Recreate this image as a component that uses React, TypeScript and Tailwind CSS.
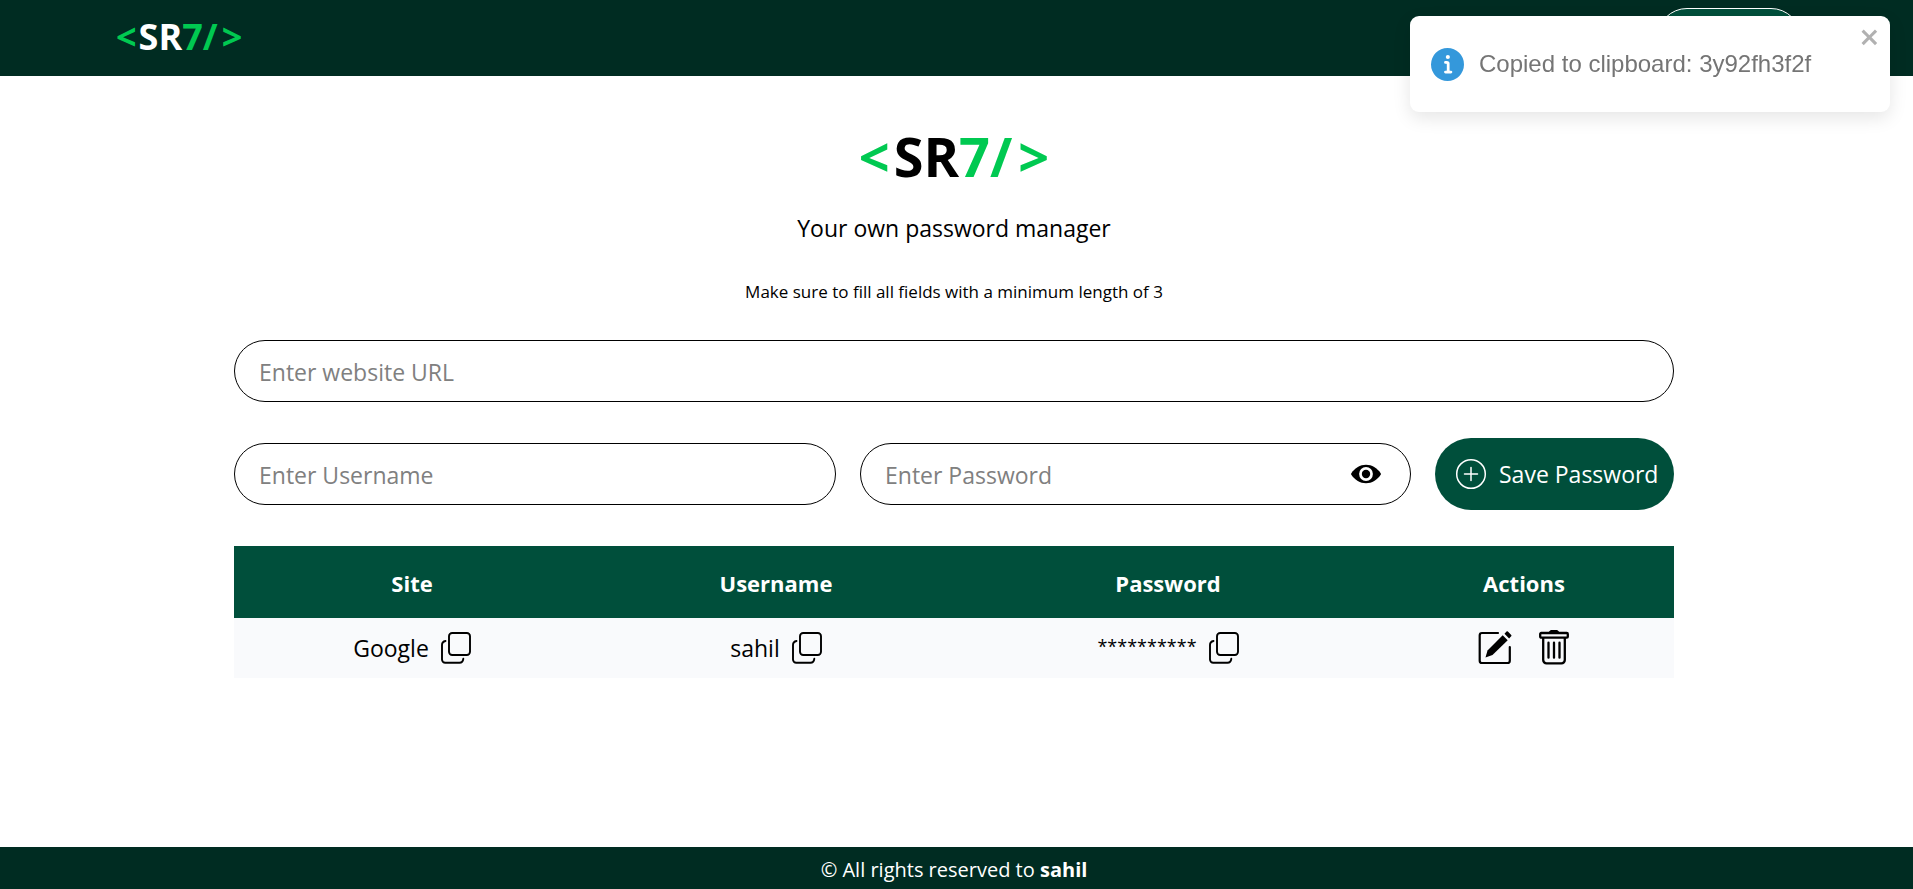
import { useState } from "react";

function Logo({ className, open, close }: { className: string; open: string; close: string }) {
  return (
    <span className={`font-bold whitespace-nowrap ${className}`}>
      <span className={`text-[#00c951] ${open}`}>&lt;</span>
      SR
      <span className="text-[#00c951]">7/</span>
      <span className={`text-[#00c951] ${close}`}>&gt;</span>
    </span>
  );
}

function CopyIcon() {
  return (
    <svg viewBox="0 0 30 32" className="h-8 w-[30px]" fill="none" stroke="#000" strokeWidth="1.9" strokeLinecap="round">
      <rect x="8" y="1" width="21" height="22" rx="3.2" />
      <path d="M4.500 9C2.400 9.400 1 10.800 1 13V27.500A3.200 3.200 0 0 0 4.200 30.700H18.500C20.700 30.700 22 29.300 22.300 26.800" />
    </svg>
  );
}

function EditIcon() {
  return (
    <svg viewBox="0 0 36 36" className="size-9" fill="none" stroke="#000" strokeWidth="2.2" strokeLinecap="round" strokeLinejoin="round">
      <path d="M20 3H4A2.300 2.300 0 0 0 1.700 5.300V30.700A2.300 2.300 0 0 0 4 33H29.500A2.300 2.300 0 0 0 31.800 30.700V17" />
      <path d="M7.500 27.500L9.500 20.500L24.700 5.300L29.700 10.300L14.500 25Z" fill="#000" stroke="none" />
      <path d="M26.500 3.800L28.500 1.600Q29.200 1 29.900 1.600L33.200 4.900Q33.900 5.600 33.200 6.300L31.100 8.500Z" fill="#000" stroke="none" />
    </svg>
  );
}

function TrashIcon() {
  return (
    <svg viewBox="0 0 32 36" className="h-9 w-8" fill="none" stroke="#000" strokeWidth="2.3" strokeLinecap="round" strokeLinejoin="round">
      <rect x="2.200" y="3" width="27.600" height="4.700" rx="1" />
      <path d="M12 2.200L13 1.200H19L20 2.200Z" fill="#000" />
      <path d="M5.200 8.200V30A3.300 3.300 0 0 0 8.500 33.300H23.500A3.300 3.300 0 0 0 26.800 30V8.200" />
      <path d="M10.500 12.700V27.700M16 12.700V27.700M21.500 12.700V27.700" />
    </svg>
  );
}

function EyeIcon() {
  return (
    <svg viewBox="0 0 32 24" className="h-6 w-8">
      <path d="M1.300 11.200C5 5.800 10 2.700 16 2.700S27 5.800 30.700 11.200Q31.200 12 30.700 12.800C27 18.200 22 21.300 16 21.300S5 18.200 1.300 12.800Q.8 12 1.300 11.200Z" />
      <circle cx="16" cy="12" r="6.900" fill="#fff" />
      <circle cx="16" cy="12" r="4.200" />
    </svg>
  );
}

function PlusIcon() {
  return (
    <svg viewBox="0 0 32 32" className="size-8 shrink-0" fill="none" stroke="#fff" strokeWidth="1.500" strokeLinecap="round">
      <circle cx="16" cy="16" r="14.300" />
      <path d="M16 9.500V22.500M9.500 16H22.500" />
    </svg>
  );
}

function Toast({ message, onClose }: { message: string; onClose: () => void }) {
  return (
    <div
      role="alert"
      className="fixed top-4 right-[23px] flex h-24 w-[480px] items-center gap-[15px] rounded-[9px] bg-white pl-[21px] font-['Liberation_Sans',sans-serif] text-2xl text-[#757575] shadow-[0_6px_18px_rgba(0,0,0,0.1)]"
    >
      <svg viewBox="0 0 24 24" className="size-[33px] shrink-0" fill="#3498db">
        <path d="M12 0a12 12 0 1012 12A12.013 12.013 0 0012 0zm.25 5a1.500 1.500 0 11-1.500 1.500 1.500 1.500 0 011.500-1.500zm2.250 13.500h-4a1 1 0 010-2h.75a.25.25 0 00.25-.25v-4.500a.25.25 0 00-.25-.25h-.75a1 1 0 010-2h1a2 2 0 012 2v4.750a.25.25 0 00.25.25h.75a1 1 0 110 2z" />
      </svg>
      <span>{message}</span>
      <button type="button" aria-label="Close" onClick={onClose} className="absolute top-[9px] right-[9px] opacity-30">
        <svg viewBox="0 0 14 16" className="h-6 w-[21px]" fill="#000">
          <path fillRule="evenodd" d="M7.710 8.230l3.750 3.750-1.480 1.480-3.750-3.750-3.750 3.750L1 11.980l3.750-3.750L1 4.480 2.480 3l3.750 3.750L9.980 3l1.480 1.480-3.750 3.750z" />
        </svg>
      </button>
    </div>
  );
}

const field =
  "h-[62px] w-full rounded-full border border-black px-6 pt-0.5 text-[23px] outline-none placeholder:text-[#808080]";

const entries = [{ site: "Google", username: "sahil", password: "3y92fh3f2f" }];

function CopyCell({ text, label, masked, onCopy }: { text: string; label: string; masked?: boolean; onCopy: () => void }) {
  return (
    <td className="py-3">
      <div className="flex h-9 items-center justify-center gap-3">
        <span className={masked ? "pb-1 text-lg" : ""}>{text}</span>
        <button type="button" aria-label={label} onClick={onCopy}>
          <CopyIcon />
        </button>
      </div>
    </td>
  );
}

export default function App() {
  const [toast, setToast] = useState("3y92fh3f2f");
  const [visible, setVisible] = useState(false);

  return (
    <div className="flex min-h-screen flex-col bg-white font-['Open_Sans','Noto_Sans',sans-serif] text-[23px] leading-9 text-black">
      <header className="bg-[#002c22]">
        <nav className="flex h-[76px] items-center justify-between pr-28 pl-[116px]">
          <a href="#">
            <Logo className="text-4xl text-white" open="mr-0.5" close="ml-1" />
          </a>
          <button type="button" aria-label="GitHub" className="h-[60px] w-36 rounded-full border border-white bg-[#004f3b]" />
        </nav>
      </header>

      <div className="flex grow flex-col pr-[5px]">
        <main className="mx-auto w-full max-w-[1440px] pt-11 text-center">
          <h1 className="leading-[72px]">
            <Logo className="text-[54px] text-black" open="mr-1" close="ml-1.5" />
          </h1>
          <p className="leading-12">Your own password manager</p>
          <p className="mt-7 text-[17px] leading-6">Make sure to fill all fields with a minimum length of 3</p>

          <form className="mt-9 flex flex-col gap-9" onSubmit={(e) => e.preventDefault()}>
            <input aria-label="Website URL" placeholder="Enter website URL" className={field} />
            <div className="flex items-center gap-6">
              <div className="grow">
                <input aria-label="Username" placeholder="Enter Username" className={field} />
              </div>
              <div className="relative w-[551px]">
                <input
                  aria-label="Password"
                  type={visible ? "text" : "password"}
                  placeholder="Enter Password"
                  className={field}
                />
                <button
                  type="button"
                  aria-label="Show password"
                  onClick={() => setVisible(!visible)}
                  className="absolute inset-y-0 right-[29px] flex items-center"
                >
                  <EyeIcon />
                </button>
              </div>
              <button
                type="submit"
                className="flex h-[72px] w-[239px] shrink-0 items-center gap-3 rounded-full bg-[#004f3b] pl-5 whitespace-nowrap text-white"
              >
                <PlusIcon />
                Save Password
              </button>
            </div>
          </form>

          <table className="mt-9 w-full table-fixed">
            <colgroup>
              <col className="w-[356px]" />
              <col className="w-[372px]" />
              <col className="w-[412px]" />
              <col className="w-[300px]" />
            </colgroup>
            <thead className="bg-[#004f3b] text-[22px] text-white">
              <tr className="h-[72px]">
                <th className="pt-0.5">Site</th>
                <th className="pt-0.5">Username</th>
                <th className="pt-0.5">Password</th>
                <th className="pt-0.5">Actions</th>
              </tr>
            </thead>
            <tbody className="bg-[#f9fafc]">
              {entries.map((e) => (
                <tr key={e.site}>
                  <CopyCell text={e.site} label="Copy site" onCopy={() => setToast(e.site)} />
                  <CopyCell text={e.username} label="Copy username" onCopy={() => setToast(e.username)} />
                  <CopyCell
                    masked
                    text={"*".repeat(e.password.length)}
                    label="Copy password"
                    onCopy={() => setToast(e.password)}
                  />
                  <td>
                    <div className="flex items-center justify-center gap-6">
                      <button type="button" aria-label="Edit">
                        <EditIcon />
                      </button>
                      <button type="button" aria-label="Delete">
                        <TrashIcon />
                      </button>
                    </div>
                  </td>
                </tr>
              ))}
            </tbody>
          </table>
        </main>
      </div>

      <footer className="flex h-[42px] items-center justify-center bg-[#002c22] pt-[3px] pr-[5px] text-xl text-white">
        <p>
          © All rights reserved to <b>sahil</b>
        </p>
      </footer>

      {toast && <Toast message={`Copied to clipboard: ${toast}`} onClose={() => setToast("")} />}
    </div>
  );
}
